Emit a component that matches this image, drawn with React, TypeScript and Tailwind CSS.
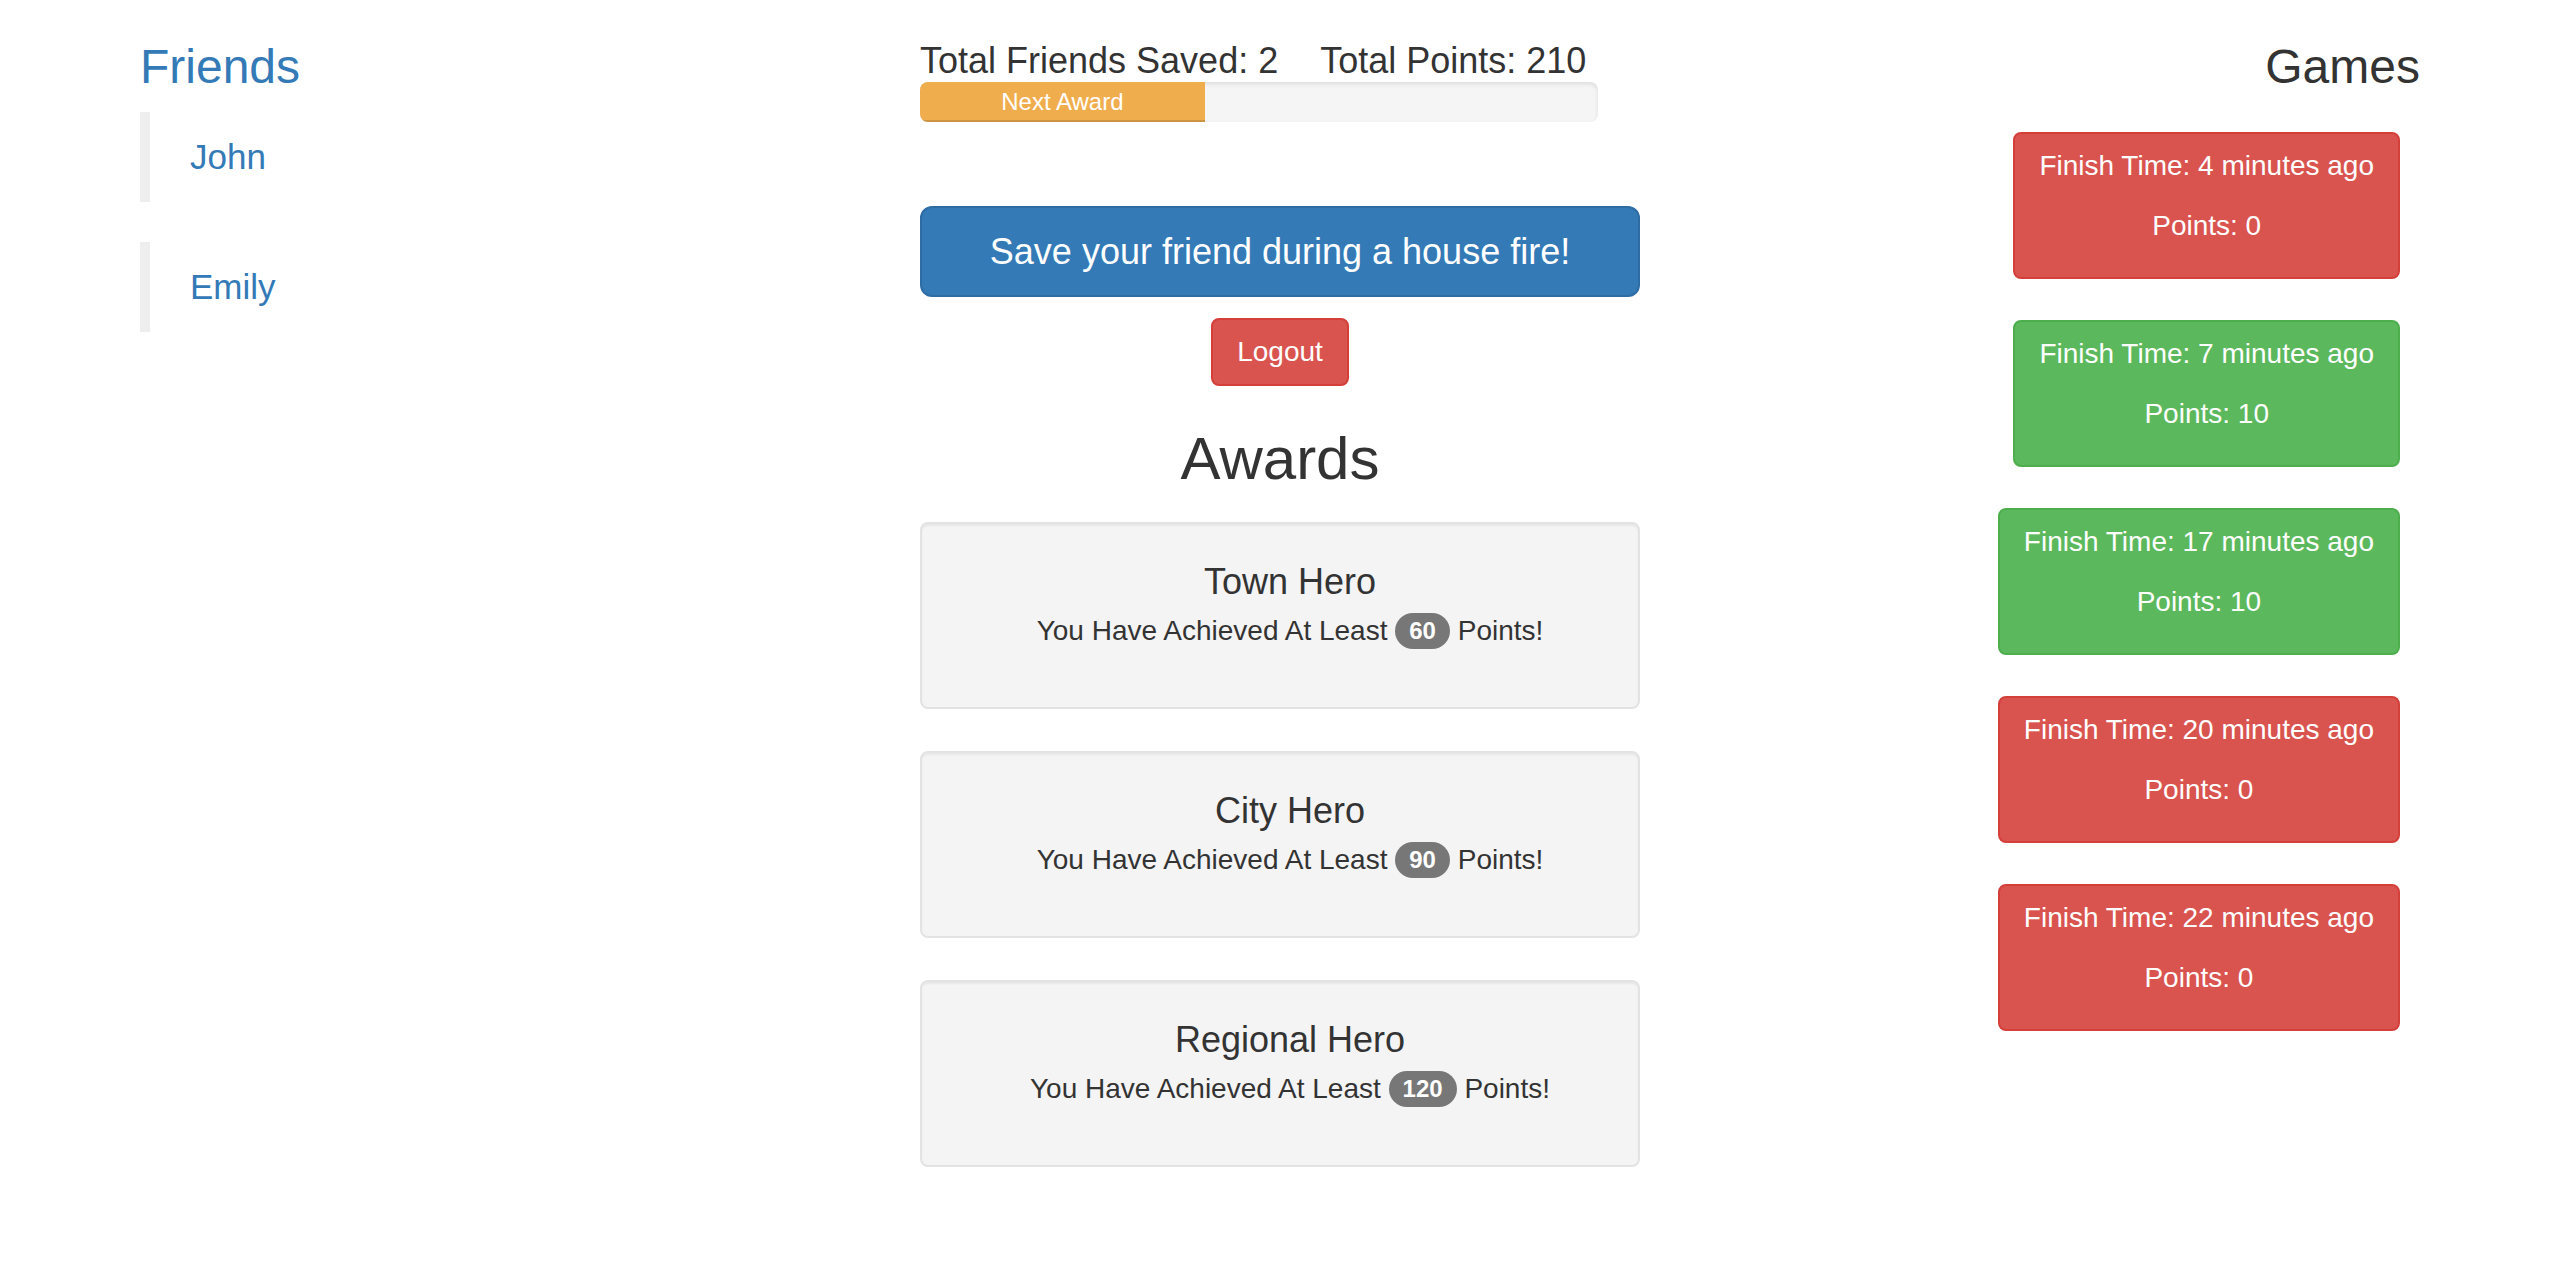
import React from 'react';

const friends = ['John', 'Emily'];

const awards = [
  { title: 'Town Hero', points: 60 },
  { title: 'City Hero', points: 90 },
  { title: 'Regional Hero', points: 120 },
];

const games = [
  { time: '4 minutes ago', points: 0 },
  { time: '7 minutes ago', points: 10 },
  { time: '17 minutes ago', points: 10 },
  { time: '20 minutes ago', points: 0 },
  { time: '22 minutes ago', points: 0 },
];

export default function App() {
  return (
    <div className="min-h-screen bg-white text-[#333] font-['Liberation_Sans',Arial,sans-serif]">
      <div className="w-[2340px] mx-auto grid grid-cols-3">
        {/* Friends */}
        <div className="px-[30px]">
          <h3 className="mt-[40px] mb-[19px] text-[48px] leading-[53px] text-[#337ab7]">Friends</h3>
          {friends.map((name) => (
            <blockquote
              key={name}
              className="mb-[40px] border-l-[10px] border-[#eee] px-[40px] py-[20px] text-[35px] leading-[50px] text-[#337ab7]"
            >
              {name}
            </blockquote>
          ))}
        </div>

        {/* Center */}
        <div className="px-[30px]">
          <div className="mt-[41px] text-[36px] leading-[40px] whitespace-nowrap">
            <span>Total Friends Saved: 2</span>
            <span className="ml-[42px]">Total Points: 210</span>
          </div>
          <div className="mt-[1px] w-[678px] h-[40px] rounded-[8px] bg-[#f5f5f5] overflow-hidden shadow-[inset_0_2px_4px_rgba(0,0,0,0.1)]">
            <div
              className="h-full bg-[#f0ad4e] text-white text-[24px] leading-[40px] text-center shadow-[inset_0_-2px_0_rgba(0,0,0,0.15)]"
              style={{ width: '42%' }}
            >
              Next Award
            </div>
          </div>

          <button className="mt-[84px] w-full h-[91px] rounded-[12px] border-2 border-[#2e6da4] bg-[#337ab7] text-white text-[36px] leading-[48px]">
            Save your friend during a house fire!
          </button>

          <div className="mt-[21px] flex justify-center">
            <button className="h-[68px] px-[24px] rounded-[8px] border-2 border-[#d43f3a] bg-[#d9534f] text-white text-[28px] leading-[40px]">
              Logout
            </button>
          </div>

          <h2 className="mt-[40px] mb-[30px] text-center text-[60px] leading-[66px]">Awards</h2>

          <div className="flex flex-col gap-[42px]">
            {awards.map((award) => (
              <div
                key={award.title}
                className="h-[187px] rounded-[8px] border-2 border-[#e3e3e3] bg-[#f4f4f4] px-[38px] pt-[38px] shadow-[inset_0_2px_2px_rgba(0,0,0,0.05)]"
              >
                <div className="pl-[20px] text-center">
                  <h4 className="mb-[9px] text-[36px] leading-[40px]">{award.title}</h4>
                  <p className="text-[28px] leading-[40px]">
                    You Have Achieved At Least{' '}
                    <span className="inline-block align-middle -mt-[4px] rounded-[20px] bg-[#777] px-[14px] py-[6px] text-[24px] leading-[24px] font-bold text-white">
                      {award.points}
                    </span>{' '}
                    Points!
                  </p>
                </div>
              </div>
            ))}
          </div>
        </div>

        {/* Games */}
        <div className="px-[30px]">
          <h3 className="mt-[40px] mb-[39px] text-right text-[48px] leading-[53px]">Games</h3>
          <div className="flex flex-col items-end gap-[41px] pr-[20px]">
            {games.map((game, i) => (
              <div
                key={i}
                className={`rounded-[8px] border-2 px-[24px] pt-[12px] pb-[11px] text-center text-white text-[28px] leading-[40px] ${
                  game.points > 0
                    ? 'bg-[#5cb85c] border-[#4cae4c]'
                    : 'bg-[#d9534f] border-[#d43f3a]'
                }`}
              >
                <p className="mb-[20px]">Finish Time: {game.time}</p>
                <p className="mb-[20px]">Points: {game.points}</p>
              </div>
            ))}
          </div>
        </div>
      </div>
    </div>
  );
}
